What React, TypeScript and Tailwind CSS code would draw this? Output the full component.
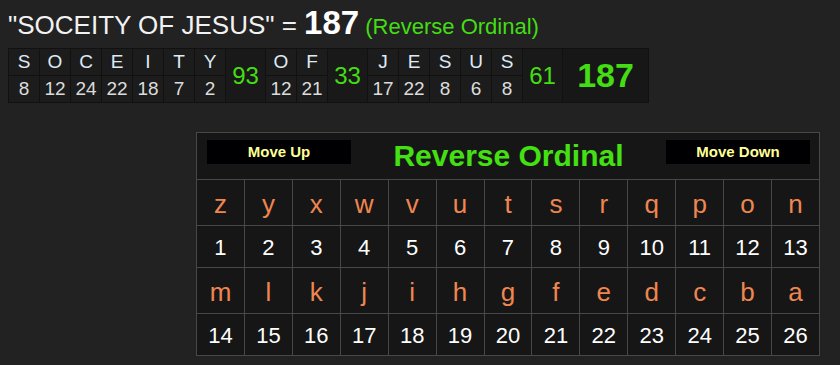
import React from 'react';

type Word = { letters: [string, number][]; total: number };

const words: Word[] = [
  { letters: [['S', 8], ['O', 12], ['C', 24], ['E', 22], ['I', 18], ['T', 7], ['Y', 2]], total: 93 },
  { letters: [['O', 12], ['F', 21]], total: 33 },
  { letters: [['J', 17], ['E', 22], ['S', 8], ['U', 6], ['S', 8]], total: 61 },
];

const alphabet = 'zyxwvutsrqponmlkjihgfedcba'.split('');

const LetterRow = ({ from }: { from: number }) => (
  <>
    {alphabet.slice(from, from + 13).map((ch) => (
      <div key={ch} className="h-[45px] bg-[#161616] flex items-center justify-center text-[26px] text-[#ef8650] pt-[3px]">
        {ch}
      </div>
    ))}
    {alphabet.slice(from, from + 13).map((ch, i) => (
      <div key={ch + 'n'} className="h-[41px] bg-[#161616] flex items-center justify-center text-[22px] text-white pt-[2px]">
        {from + i + 1}
      </div>
    ))}
  </>
);

export default function App() {
  return (
    <div className="flow-root min-h-screen bg-[#222222] font-['Liberation_Sans',Arial,sans-serif] text-white">
      {/* Заголовок */}
      <div className="flex items-baseline pl-2 h-[48px] -mt-[2px] pb-[2px] whitespace-nowrap">
        <span className="text-[26px] text-[#f2f2f2]">"SOCEITY OF JESUS" =&nbsp;</span>
        <span className="text-[33px] font-bold text-white">187</span>
        <span className="text-[22px] text-[#44dd14]">&nbsp;(Reverse Ordinal)</span>
      </div>

      {/* Разбивка по буквам */}
      <div className="ml-2 mt-[2px] inline-flex gap-px bg-[#111111] p-px">
        {words.map((w, wi) => (
          <React.Fragment key={wi}>
            {w.letters.map(([ch, n], i) => (
              <div key={i} className="flex flex-col gap-px w-[30px]">
                <div className="h-[26px] bg-[#1c1c1c] flex items-center justify-center text-[19px] text-[#dfeaf4]">{ch}</div>
                <div className="h-[26px] bg-[#1c1c1c] flex items-center justify-center text-[19px] text-[#dcdcdc]">{n}</div>
              </div>
            ))}
            <div className="w-[39px] h-[53px] bg-[#191919] flex items-center justify-center text-[24px] text-[#44dd14]">
              {w.total}
            </div>
          </React.Fragment>
        ))}
        <div className="w-[85px] h-[53px] bg-[#171717] flex items-center justify-center text-[34px] font-bold text-[#44dd14]">
          187
        </div>
      </div>

      {/* Таблица шифра */}
      <div className="ml-[196px] mt-[29px] w-[624px] border border-[#474747] bg-[#161616]">
        <div className="h-[46px] flex items-start justify-between pl-[10px] pr-[9px] pt-[6px]">
          <button className="mt-[1px] w-[144px] h-[24px] bg-[#000003] text-[15px] font-bold text-[#ffff96]">Move Up</button>
          <span className="text-[30px] font-bold text-[#44e014] leading-[34px]">Reverse Ordinal</span>
          <button className="mt-[1px] w-[144px] h-[24px] bg-[#000003] text-[15px] font-bold text-[#ffff96]">Move Down</button>
        </div>
        <div className="grid grid-cols-[repeat(13,minmax(0,1fr))] gap-px bg-[#474747] border-t border-[#474747]">
          <LetterRow from={0} />
          <LetterRow from={13} />
        </div>
      </div>
    </div>
  );
}
